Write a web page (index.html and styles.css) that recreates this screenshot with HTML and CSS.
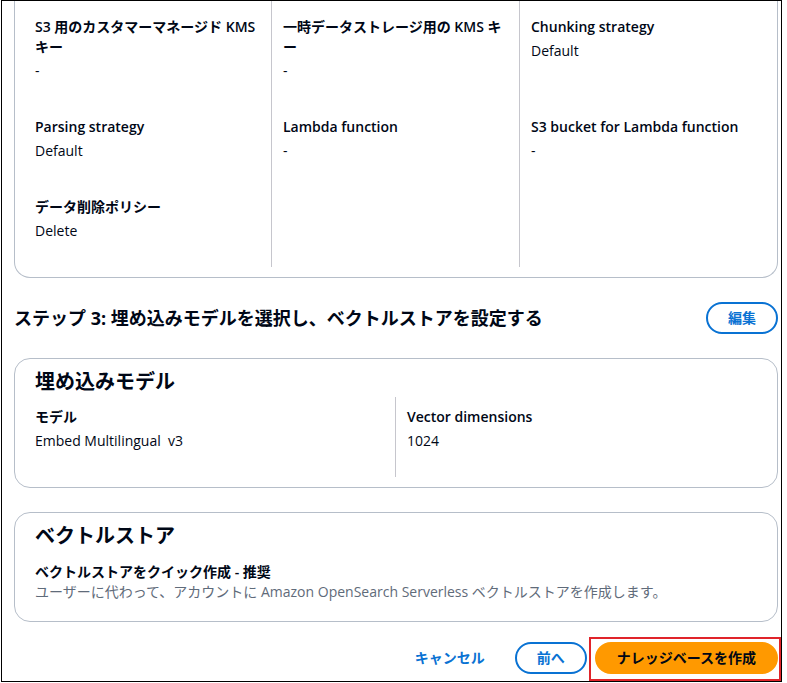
FILE: index.html
```html
<!DOCTYPE html>
<html lang="ja">
<head>
<meta charset="utf-8">
<title>ナレッジベースを作成</title>
<link rel="stylesheet" href="styles.css">
</head>
<body>
<div class="frame">
  <section class="card card--cut">
    <div class="cols cols-3">
      <div class="cell cell--first"><div class="kv-label">S3 用のカスタマーマネージド KMS キー</div><div class="kv-value">-</div></div>
      <div class="cell cell--first"><div class="kv-label">一時データストレージ用の KMS キー</div><div class="kv-value">-</div></div>
      <div class="cell cell--first"><div class="kv-label">Chunking strategy</div><div class="kv-value">Default</div></div>
      <div class="cell"><div class="kv-label">Parsing strategy</div><div class="kv-value">Default</div></div>
      <div class="cell"><div class="kv-label">Lambda function</div><div class="kv-value">-</div></div>
      <div class="cell"><div class="kv-label">S3 bucket for Lambda function</div><div class="kv-value">-</div></div>
      <div class="cell"><div class="kv-label">データ削除ポリシー</div><div class="kv-value">Delete</div></div>
      <div class="cell"></div>
      <div class="cell"></div>
    </div>
  </section>

  <div class="step-header">
    <h2 class="step-title">ステップ 3: 埋め込みモデルを選択し、ベクトルストアを設定する</h2>
    <button class="btn">編集</button>
  </div>

  <section class="card">
    <div class="card-header"><h3 class="card-title">埋め込みモデル</h3></div>
    <div class="cols cols-2">
      <div class="cell"><div class="kv-label">モデル</div><div class="kv-value">Embed Multilingual&nbsp; v3</div></div>
      <div class="cell"><div class="kv-label">Vector dimensions</div><div class="kv-value">1024</div></div>
    </div>
  </section>

  <section class="card">
    <div class="card-header"><h3 class="card-title">ベクトルストア</h3></div>
    <div class="card-body">
      <div class="kv-label kv-label--tight">ベクトルストアをクイック作成 - 推奨</div>
      <div class="desc">ユーザーに代わって、アカウントに Amazon OpenSearch Serverless ベクトルストアを作成します。</div>
    </div>
  </section>

  <div class="actions">
    <button class="btn btn-link">キャンセル</button>
    <button class="btn">前へ</button>
    <span class="highlight"><button class="btn btn-primary">ナレッジベースを作成</button></span>
  </div>
</div>
</body>
</html>
```

FILE: styles.css
```css
* { box-sizing: border-box; }

html, body {
  margin: 0;
  padding: 0;
  background: #ffffff;
}

body {
  font-family: "Open Sans", "Noto Sans CJK JP", sans-serif;
  font-size: 14px;
  line-height: 20px;
  color: #000716;
}

.frame {
  margin-left: 1px;
  width: 781px;
  height: 682px;
  border: 1px solid #000000;
  padding: 0 3px 0 12px;
  overflow: hidden;
}

.card {
  width: 764px;
  border: 1px solid #b6bec9;
  border-radius: 16px;
  background: #ffffff;
  margin-top: 24px;
}

.card--cut {
  margin-top: 0;
  border-top: none;
  border-radius: 0 0 16px 16px;
  padding: 0 10px 10px 8px;
}

.cols {
  display: grid;
  width: 744px;
}

.cols-3 { grid-template-columns: repeat(3, 1fr); }
.cols-2 { grid-template-columns: repeat(2, 1fr); }

.card .cols-2 {
  margin: 0 10px 10px 8px;
}

.cell {
  border-left: 1px solid #c6c6cd;
  padding: 10px 10px 26px 11px;
  min-width: 0;
}

.cols-3 .cell:nth-child(3n+1),
.cols-2 .cell:nth-child(2n+1) {
  border-left-color: transparent;
}

.cell--first {
  padding-top: 16px;
}

.kv-label {
  font-weight: 600;
  margin-bottom: 4px;
}

.kv-label--tight {
  margin-bottom: 0;
}

.kv-value {
  font-weight: 400;
}

.step-header {
  display: flex;
  align-items: center;
  justify-content: space-between;
  width: 764px;
  margin-top: 24px;
}

.step-title {
  margin: 0;
  font-size: 18px;
  line-height: 22px;
  font-weight: 700;
}

.card-header {
  padding: 11px 20px 3px 20px;
}

.card-title {
  margin: 0;
  font-size: 20px;
  line-height: 24px;
  font-weight: 700;
}

.card-body {
  padding: 11px 20px 19px 20px;
}

.desc {
  color: #5f6b7a;
}

.btn {
  font-family: inherit;
  font-size: 14px;
  line-height: 20px;
  font-weight: 700;
  color: #0972d3;
  background: #ffffff;
  border: 2px solid #0972d3;
  border-radius: 20px;
  padding: 4px 20px;
  cursor: pointer;
  white-space: nowrap;
}

.btn-link {
  border-color: transparent;
  background: transparent;
}

.btn-primary {
  background: #ff9900;
  border-color: #ff9900;
  color: #000716;
}

.actions {
  display: flex;
  justify-content: flex-end;
  align-items: center;
  gap: 8px;
  width: 764px;
  margin-top: 20px;
}

.highlight {
  position: relative;
  display: inline-flex;
}

.highlight::after {
  content: "";
  position: absolute;
  left: -6px;
  top: -5px;
  right: -3px;
  bottom: -7px;
  border: 2px solid #e0242a;
  pointer-events: none;
}
```
